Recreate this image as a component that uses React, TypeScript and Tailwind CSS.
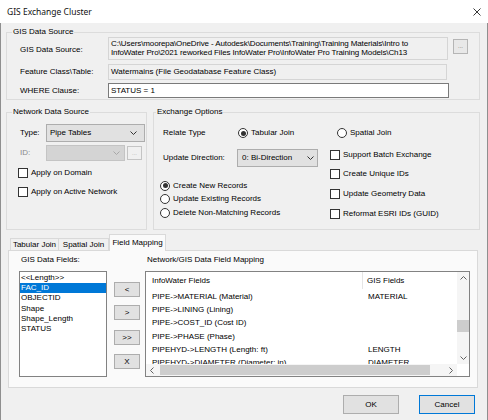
import React from "react";

const pathLines = [
  "C:\\Users\\moorepa\\OneDrive - Autodesk\\Documents\\Training\\Training Materials\\Intro to",
  "InfoWater Pro\\2021 reworked Files InfoWater Pro\\InfoWater Pro Training Models\\Ch13",
  "\\CityData_Updates.gdb\\Watermains",
];

const gisFields = ["<<Length>>", "FAC_ID", "OBJECTID", "Shape", "Shape_Length", "STATUS"];

const mappings: [string, string][] = [
  ["PIPE->MATERIAL (Material)", "MATERIAL"],
  ["PIPE->LINING (Lining)", ""],
  ["PIPE->COST_ID (Cost ID)", ""],
  ["PIPE->PHASE (Phase)", ""],
  ["PIPEHYD->LENGTH (Length: ft)", "LENGTH"],
  ["PIPEHYD->DIAMETER (Diameter: in)", "DIAMETER"],
];

function Chevron({ dir = "down", color = "#333" }: { dir?: "down" | "up" | "left" | "right"; color?: string }) {
  const d = {
    down: "M0.5 0.5L3.5 3.5L6.5 0.5",
    up: "M0.5 3.5L3.5 0.5L6.5 3.5",
    left: "M3.5 0.5L0.5 3.5L3.5 6.5",
    right: "M0.5 0.5L3.5 3.5L0.5 6.5",
  }[dir];
  const vert = dir === "left" || dir === "right";
  return (
    <svg width={vert ? 4 : 7} height={vert ? 7 : 4} viewBox={vert ? "0 0 4 7" : "0 0 7 4"} fill="none">
      <path d={d} stroke={color} strokeWidth="1" />
    </svg>
  );
}

function Checkbox({ label }: { label: string }) {
  return (
    <div className="flex items-center">
      <span className="h-[10px] w-[10px] border border-[#333] bg-white" />
      <span className="ml-[3px]">{label}</span>
    </div>
  );
}

function Radio({ label, checked }: { label: string; checked?: boolean }) {
  return (
    <div className="flex items-center">
      <span className="flex h-[10px] w-[10px] items-center justify-center rounded-full border border-[#333] bg-white">
        {checked && <span className="h-[5px] w-[5px] rounded-full bg-[#333]" />}
      </span>
      <span className="ml-[3px]">{label}</span>
    </div>
  );
}

export default function App() {
  return (
    <div className="flex h-[420px] w-[488px] flex-col overflow-hidden bg-[#f0f0f0] font-['Liberation_Sans',Arial,sans-serif] text-[8px] leading-[10px] text-black">
      {/* Title bar */}
      <div className="flex h-[23px] shrink-0 items-center justify-between bg-white pl-[7px] pr-[7px]">
        <span className="font-['Noto_Sans',sans-serif] text-[8.5px] text-[#111]">GIS Exchange Cluster</span>
        <svg width="8" height="8" viewBox="0 0 8 8" fill="none">
          <path d="M0.5 0.5L7.5 7.5M7.5 0.5L0.5 7.5" stroke="#222" strokeWidth="0.9" />
        </svg>
      </div>

      {/* Body */}
      <div className="flex flex-1 flex-col border-x border-[#8f8f8f] pl-[5px] pr-[7px]">
        {/* GIS Data Source */}
        <fieldset className="mt-[4px] border border-[#dcdcdc]">
          <legend className="ml-[5px] px-[1px] leading-[10px]">GIS Data Source</legend>
          <div className="flex flex-col pb-[1px] pl-[13px]">
            <div className="flex items-center">
              <span className="w-[88px] pt-[3px]">GIS Data Source:</span>
              <div className="h-[23px] w-[340px] overflow-hidden whitespace-nowrap border border-[#d5d5d5] bg-[#f0f0f0] pl-[2px] pt-[1px] leading-[9.3px] tracking-[-0.12px]">
                {pathLines.map((l) => (
                  <div key={l}>{l}</div>
                ))}
              </div>
              <div className="mb-[5px] ml-[5px] flex h-[15px] w-[15px] items-center justify-center border border-[#b5b5b5] bg-[#e8e8e8] text-[6px] text-[#666]">
                ...
              </div>
            </div>
            <div className="mt-[4px] flex h-[16px] items-center">
              <span className="w-[88px]">Feature Class\Table:</span>
              <div className="flex h-[16px] w-[339px] items-center border border-[#d5d5d5] bg-[#f0f0f0] pl-[2px]">
                Watermains (File Geodatabase Feature Class)
              </div>
            </div>
            <div className="mt-[3px] flex h-[15px] items-center">
              <span className="w-[88px]">WHERE Clause:</span>
              <div className="flex h-[15px] w-[341px] items-center border border-[#7a7a7a] bg-white pl-[2px]">
                STATUS = 1
              </div>
            </div>
          </div>
        </fieldset>

        {/* Network / Exchange */}
        <div className="mt-[7px] flex gap-[6px]">
          <fieldset className="h-[123px] w-[141px] border border-[#dcdcdc]">
            <legend className="ml-[5px] px-[1px] leading-[10px]">Network Data Source</legend>
            <div className="flex flex-col pl-[13px]">
              <div className="mt-[7px] flex h-[18px] items-center">
                <span className="w-[26px]">Type:</span>
                <div className="flex h-[18px] w-[99px] items-center justify-between border border-[#adadad] bg-[#e1e1e1] pl-[3px] pr-[7px]">
                  <span>Pipe Tables</span>
                  <Chevron />
                </div>
              </div>
              <div className="mt-[3px] flex h-[16px] items-center">
                <span className="w-[26px] text-[#8a8a8a]">ID:</span>
                <div className="flex h-[16px] w-[79px] items-center justify-end border border-[#c4c4c4] bg-[#d4d4d4] pr-[4px]">
                  <Chevron color="#a8a8a8" />
                </div>
                <div className="ml-[2px] flex h-[14px] w-[15px] items-center justify-center border border-[#c4c4c4] bg-[#f0f0f0] text-[6px] text-[#aaa]">
                  ...
                </div>
              </div>
              <div className="-ml-[2px] mt-[6px] flex h-[12px] items-center">
                <Checkbox label="Apply on Domain" />
              </div>
              <div className="-ml-[2px] mt-[7px] flex h-[12px] items-center">
                <Checkbox label="Apply on Active Network" />
              </div>
            </div>
          </fieldset>

          <fieldset className="h-[123px] flex-1 border border-[#dcdcdc]">
            <legend className="ml-[2px] px-[1px] leading-[10px]">Exchange Options</legend>
            <div className="flex flex-col pl-[6px]">
              <div className="mt-[9px] flex h-[14px] items-center">
                <span className="w-[78px] pl-[3px]">Relate Type</span>
                <div className="w-[99px]">
                  <Radio label="Tabular Join" checked />
                </div>
                <Radio label="Spatial Join" />
              </div>
              <div className="mt-[5px] flex">
                <div className="flex w-[170px] flex-col">
                  <div className="mt-[4px] flex h-[18px] items-center">
                    <span className="w-[77px] pl-[3px]">Update Direction:</span>
                    <div className="flex h-[18px] w-[81px] items-center justify-between border border-[#adadad] bg-[#e1e1e1] pl-[4px] pr-[3px]">
                      <span>0: Bi-Direction</span>
                      <Chevron />
                    </div>
                  </div>
                  <div className="mt-[12px] flex h-[13.5px] items-center">
                    <Radio label="Create New Records" checked />
                  </div>
                  <div className="flex h-[13.5px] items-center">
                    <Radio label="Update Existing Records" />
                  </div>
                  <div className="flex h-[13.5px] items-center">
                    <Radio label="Delete Non-Matching Records" />
                  </div>
                </div>
                <div className="flex flex-col">
                  <div className="flex h-[19.6px] items-center">
                    <Checkbox label="Support Batch Exchange" />
                  </div>
                  <div className="flex h-[19.6px] items-center">
                    <Checkbox label="Create Unique IDs" />
                  </div>
                  <div className="flex h-[19.6px] items-center">
                    <Checkbox label="Update Geometry Data" />
                  </div>
                  <div className="flex h-[19.6px] items-center">
                    <Checkbox label="Reformat ESRI IDs (GUID)" />
                  </div>
                </div>
              </div>
            </div>
          </fieldset>
        </div>

        {/* Tabs */}
        <div className="relative z-10 ml-[4px] mt-[4px] flex h-[17px] items-end">
          <div className="mb-[1px] flex h-[12px] w-[49px] items-center justify-center border border-b-0 border-[#d9d9d9] bg-[#f0f0f0]">
            Tabular Join
          </div>
          <div className="-ml-[1px] mb-[1px] flex h-[12px] w-[51px] items-center justify-center border border-b-0 border-[#d9d9d9] bg-[#f0f0f0]">
            Spatial Join
          </div>
          <div className="flex h-[17px] w-[57px] items-center justify-center border border-b-0 border-[#d9d9d9] bg-[#fafafa] pb-[1px]">
            Field Mapping
          </div>
        </div>
        <div className="-mt-[1px] ml-[2px] mr-[2px] flex h-[138px] border border-[#d9d9d9] bg-[#fafafa] pl-[10px] pt-[4px]">
          {/* GIS fields list */}
          <div className="flex w-[88px] flex-col">
            <span className="pl-[2px]">GIS Data Fields:</span>
            <div className="mt-[6px] h-[106px] border border-[#828282] bg-white pt-[1px]">
              {gisFields.map((f) => (
                <div
                  key={f}
                  className={
                    f === "FAC_ID"
                      ? "flex h-[10.2px] items-center bg-[#0078d7] pl-[1px] text-white"
                      : "flex h-[10.2px] items-center pl-[1px]"
                  }
                >
                  {f}
                </div>
              ))}
            </div>
          </div>

          {/* Move buttons */}
          <div className="ml-[7px] flex w-[26px] flex-col">
            <div className="mt-[27px] flex h-[15px] items-center justify-center border border-[#adadad] bg-[#e1e1e1]">&lt;</div>
            <div className="mt-[8px] flex h-[15px] items-center justify-center border border-[#adadad] bg-[#e1e1e1]">&gt;</div>
            <div className="mt-[10px] flex h-[15px] items-center justify-center border border-[#adadad] bg-[#e1e1e1]">&gt;&gt;</div>
            <div className="mt-[9px] flex h-[15px] items-center justify-center border border-[#adadad] bg-[#e1e1e1]">X</div>
          </div>

          {/* Mapping list view */}
          <div className="ml-[5px] flex w-[325px] flex-col">
            <span className="pl-[2px]">Network/GIS Data Field Mapping</span>
            <div className="mt-[6px] flex h-[106px] flex-col border border-[#828282] bg-white">
              <div className="flex h-[92px]">
                <div className="flex-1 overflow-hidden">
                  <div className="flex h-[17px] items-center">
                    <span className="w-[217px] border-r border-[#e5e5e5] pl-[6px] leading-[17px]">InfoWater Fields</span>
                    <span className="pl-[4px]">GIS Fields</span>
                  </div>
                  <div className="pt-[1.5px]">
                    {mappings.map(([a, b]) => (
                      <div key={a} className="flex h-[13.2px] items-center whitespace-nowrap">
                        <span className="w-[217px] pl-[6px]">{a}</span>
                        <span className="pl-[5px]">{b}</span>
                      </div>
                    ))}
                  </div>
                </div>
                <div className="flex w-[12px] flex-col bg-[#f5f5f5]">
                  <div className="flex h-[12px] items-center justify-center">
                    <Chevron dir="up" color="#606060" />
                  </div>
                  <div className="flex-1">
                    <div className="mt-[36px] h-[12px] bg-[#cdcdcd]" />
                  </div>
                  <div className="flex h-[12px] items-center justify-center">
                    <Chevron color="#606060" />
                  </div>
                </div>
              </div>
              <div className="flex h-[12px]">
                <div className="flex flex-1 items-center bg-[#f5f5f5]">
                  <div className="flex h-[12px] w-[12px] items-center justify-center">
                    <Chevron dir="left" color="#606060" />
                  </div>
                  <div className="ml-[2px] h-[10px] w-[270px] bg-[#cdcdcd]" />
                  <div className="flex-1" />
                  <div className="flex h-[12px] w-[12px] items-center justify-center">
                    <Chevron dir="right" color="#606060" />
                  </div>
                </div>
                <div className="w-[12px] bg-white" />
              </div>
            </div>
          </div>
        </div>

        {/* Dialog buttons */}
        <div className="mr-[5px] mt-[7px] flex justify-end gap-[20px]">
          <div className="flex h-[19px] w-[56px] items-center justify-center border border-[#adadad] bg-[#e1e1e1]">OK</div>
          <div className="flex h-[19px] w-[56px] items-center justify-center border border-[#0078d7] bg-[#e1e1e1]">Cancel</div>
        </div>
      </div>
    </div>
  );
}
